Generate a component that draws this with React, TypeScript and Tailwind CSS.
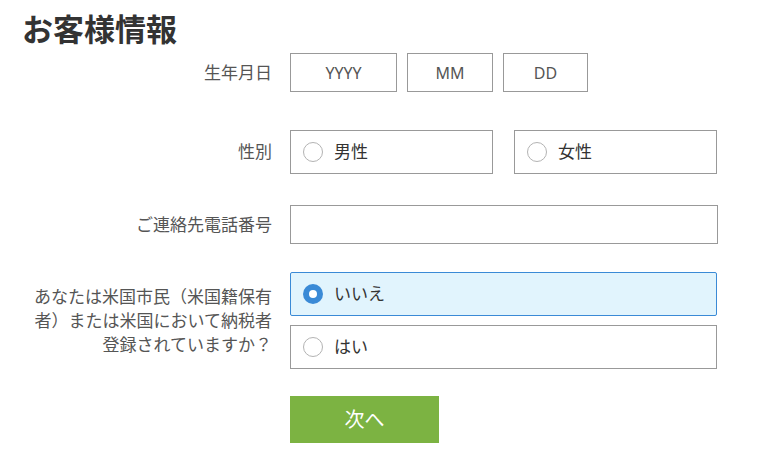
import { useState } from "react";

const Radio = ({ checked }: { checked: boolean }) =>
  checked ? (
    <span className="w-5 h-5 rounded-full bg-[#3a8ad6] flex items-center justify-center shrink-0">
      <span className="w-2 h-2 rounded-full bg-white" />
    </span>
  ) : (
    <span className="w-5 h-5 rounded-full border-[1.5px] border-[#b3b3b3] bg-white shrink-0" />
  );

const App = () => {
  const [gender, setGender] = useState<"male" | "female" | null>(null);
  const [usPerson, setUsPerson] = useState<"no" | "yes">("no");

  return (
    <div
      className="w-[779px] h-[475px] bg-white pl-[22px] pt-[9px] text-[#555]"
      style={{ fontFamily: '"Noto Sans", "Noto Sans CJK JP", sans-serif' }}
    >
      {/* PAGE HEADER */}
      <h1 className="text-[31px] leading-[40px] font-bold text-[#333]">お客様情報</h1>

      {/* BIRTHDAY */}
      <div className="flex items-center mt-[4px]">
        <label className="w-[250px] text-right text-[17px] mr-[18px]">生年月日</label>
        <div className="flex gap-[10px]">
          <input
            placeholder="YYYY"
            className="w-[107px] h-[39px] border border-[#999] text-center text-[16px] text-[#555] placeholder:text-[#555] outline-none"
          />
          <input
            placeholder="MM"
            className="w-[86px] h-[39px] border border-[#999] text-center text-[16px] text-[#555] placeholder:text-[#555] outline-none"
          />
          <input
            placeholder="DD"
            className="w-[85px] h-[39px] border border-[#999] text-center text-[16px] text-[#555] placeholder:text-[#555] outline-none"
          />
        </div>
      </div>

      {/* GENDER */}
      <div className="flex items-center mt-[38px]">
        <label className="w-[250px] text-right text-[17px] mr-[18px]">性別</label>
        <div className="flex gap-[21px]">
          <button
            onClick={() => setGender("male")}
            className="w-[203px] h-[44px] border border-[#999] flex items-center pl-[12px] gap-[11px] text-[17px] text-[#333]"
          >
            <Radio checked={gender === "male"} />
            男性
          </button>
          <button
            onClick={() => setGender("female")}
            className="w-[203px] h-[44px] border border-[#999] flex items-center pl-[12px] gap-[11px] text-[17px] text-[#333]"
          >
            <Radio checked={gender === "female"} />
            女性
          </button>
        </div>
      </div>

      {/* PHONE */}
      <div className="flex items-center mt-[31px]">
        <label className="w-[250px] text-right text-[17px] mr-[18px]">ご連絡先電話番号</label>
        <input className="w-[428px] h-[39px] border border-[#999] outline-none px-3 text-[16px]" />
      </div>

      {/* US PERSON */}
      <div className="flex items-center mt-[28px]">
        <label className="w-[250px] text-right text-[17px] leading-[24px] mr-[18px]">
          あなたは米国市民（米国籍保有者）または米国において納税者登録されていますか？
        </label>
        <div className="flex flex-col gap-[9px]">
          <button
            onClick={() => setUsPerson("no")}
            className={
              usPerson === "no"
                ? "w-[427px] h-[44px] border border-[#3a8ad6] bg-[#e1f4fd] rounded-[2px] flex items-center pl-[12px] gap-[11px] text-[17px] text-[#333]"
                : "w-[427px] h-[44px] border border-[#999] bg-white flex items-center pl-[12px] gap-[11px] text-[17px] text-[#333]"
            }
          >
            <Radio checked={usPerson === "no"} />
            いいえ
          </button>
          <button
            onClick={() => setUsPerson("yes")}
            className={
              usPerson === "yes"
                ? "w-[427px] h-[44px] border border-[#3a8ad6] bg-[#e1f4fd] rounded-[2px] flex items-center pl-[12px] gap-[11px] text-[17px] text-[#333]"
                : "w-[427px] h-[44px] border border-[#999] bg-white flex items-center pl-[12px] gap-[11px] text-[17px] text-[#333]"
            }
          >
            <Radio checked={usPerson === "yes"} />
            はい
          </button>
        </div>
      </div>

      {/* SUBMIT */}
      <div className="flex mt-[27px]">
        <div className="w-[250px] mr-[18px]" />
        <button className="w-[149px] h-[47px] bg-[#7cb342] text-white text-[20px]">次へ</button>
      </div>
    </div>
  );
};

export default App;
